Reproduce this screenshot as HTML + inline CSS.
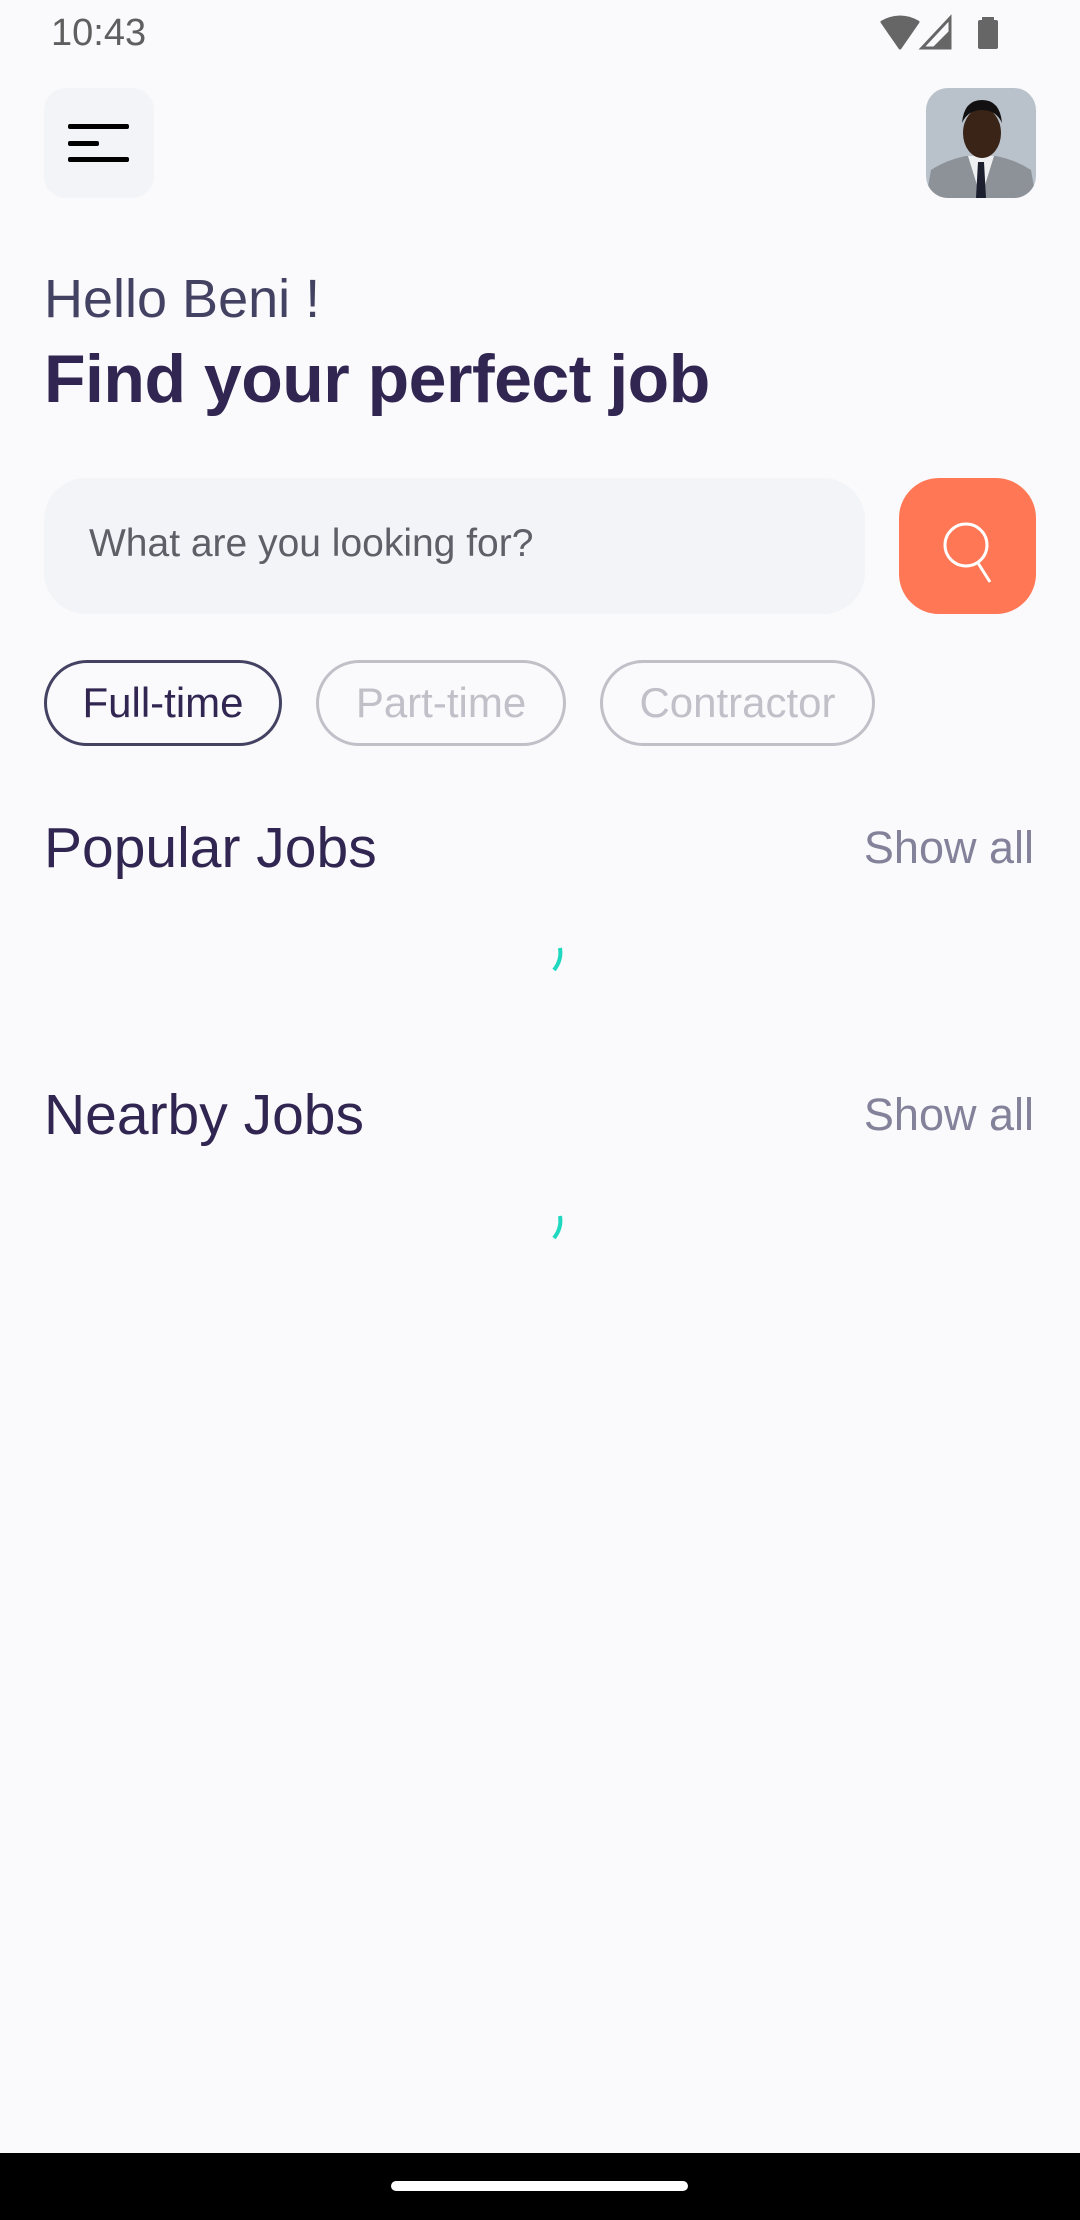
<!DOCTYPE html>
<html><head><meta charset="utf-8"><style>
*{margin:0;padding:0;box-sizing:border-box}
body{width:1080px;height:2220px;background:#FAFAFC;font-family:"Liberation Sans",sans-serif;position:relative;overflow:hidden}
.a{position:absolute;white-space:nowrap}
</style></head><body>
<div class="a" style="left:51px;top:12px;font-size:38px;color:#5f5f5f">10:43</div>
<svg class="a" style="left:880px;top:14px" width="130" height="38" viewBox="0 0 130 38">
<path d="M2 8 Q20 -2 38 8 L20 34 Z" fill="#666" stroke="#666" stroke-width="3" stroke-linejoin="round"/>
<path d="M70 4 L70 34 L42 34 Z" fill="none" stroke="#666" stroke-width="3"/>
<path d="M52 34 L70 34 L70 16 Z" fill="#666"/>
<rect x="102" y="3" width="12" height="4" fill="#666"/><rect x="98" y="6" width="20" height="29" rx="2" fill="#666"/>
</svg>
<div class="a" style="left:44px;top:88px;width:110px;height:110px;border-radius:22px;background:#F3F4F8"></div>
<div class="a" style="left:68px;top:124px;width:61px;height:5px;background:#000;border-radius:2px"></div>
<div class="a" style="left:68px;top:141px;width:31px;height:5px;background:#000;border-radius:2px"></div>
<div class="a" style="left:68px;top:157px;width:61px;height:5px;background:#000;border-radius:2px"></div>
<div class="a" style="left:926px;top:88px;width:110px;height:110px;border-radius:22px;overflow:hidden;background:#b9c2cb">
<svg width="110" height="110" viewBox="0 0 110 110">
<path d="M0 110 L5 82 Q20 72 40 68 L70 68 Q90 72 105 82 L110 110 Z" fill="#8d9299"/>
<path d="M42 68 L55 110 L68 68 Z" fill="#eef0f2"/>
<path d="M52 74 L58 74 L60 110 L50 110 Z" fill="#1b1f2e"/>
<ellipse cx="56" cy="45" rx="19" ry="25" fill="#3a2418"/>
<path d="M36 35 Q38 12 56 12 Q74 12 76 35 Q70 22 56 22 Q42 22 36 35Z" fill="#121010"/>
</svg></div>
<div class="a" style="left:44px;top:268px;font-size:54px;color:#444262">Hello Beni !</div>
<div class="a" style="left:44px;top:340px;font-size:68px;font-weight:bold;color:#312651;letter-spacing:-0.5px">Find your perfect job</div>
<div class="a" style="left:44px;top:478px;width:821px;height:136px;border-radius:42px;background:#F3F4F8"></div>
<div class="a" style="left:89px;top:522px;font-size:39px;color:#5f5f68">What are you looking for?</div>
<div class="a" style="left:899px;top:478px;width:137px;height:136px;border-radius:40px;background:#FF7754"></div>
<svg class="a" style="left:935px;top:515px" width="70" height="70" viewBox="0 0 70 70"><circle cx="31" cy="30" r="21" fill="none" stroke="#fff" stroke-width="3"/><path d="M43 48 L55 67" stroke="#fff" stroke-width="3"/></svg>
<div class="a" style="left:44px;top:660px;width:238px;height:86px;border-radius:43px;border:3px solid #444262;font-size:42px;color:#312651;text-align:center;line-height:80px">Full-time</div>
<div class="a" style="left:316px;top:660px;width:250px;height:86px;border-radius:43px;border:3px solid #C1C0C8;font-size:42px;color:#C1C0C8;text-align:center;line-height:80px">Part-time</div>
<div class="a" style="left:600px;top:660px;width:275px;height:86px;border-radius:43px;border:3px solid #C1C0C8;font-size:42px;color:#C1C0C8;text-align:center;line-height:80px">Contractor</div>
<div class="a" style="left:44px;top:815px;font-size:57px;color:#312651">Popular Jobs</div>
<div class="a" style="right:46px;top:822px;font-size:45px;color:#83829A">Show all</div>
<svg class="a" style="left:540px;top:940px" width="36" height="36"><path d="M20 8 Q22 20 14 30" fill="none" stroke="#1ED8C0" stroke-width="4"/></svg>
<div class="a" style="left:44px;top:1082px;font-size:57px;color:#312651">Nearby Jobs</div>
<div class="a" style="right:46px;top:1089px;font-size:45px;color:#83829A">Show all</div>
<svg class="a" style="left:540px;top:1208px" width="36" height="36"><path d="M20 8 Q22 20 14 30" fill="none" stroke="#1ED8C0" stroke-width="4"/></svg>
<div class="a" style="left:0;top:2153px;width:1080px;height:67px;background:#000"></div>
<div class="a" style="left:391px;top:2181px;width:297px;height:10px;border-radius:5px;background:#fff"></div>
</body></html>
